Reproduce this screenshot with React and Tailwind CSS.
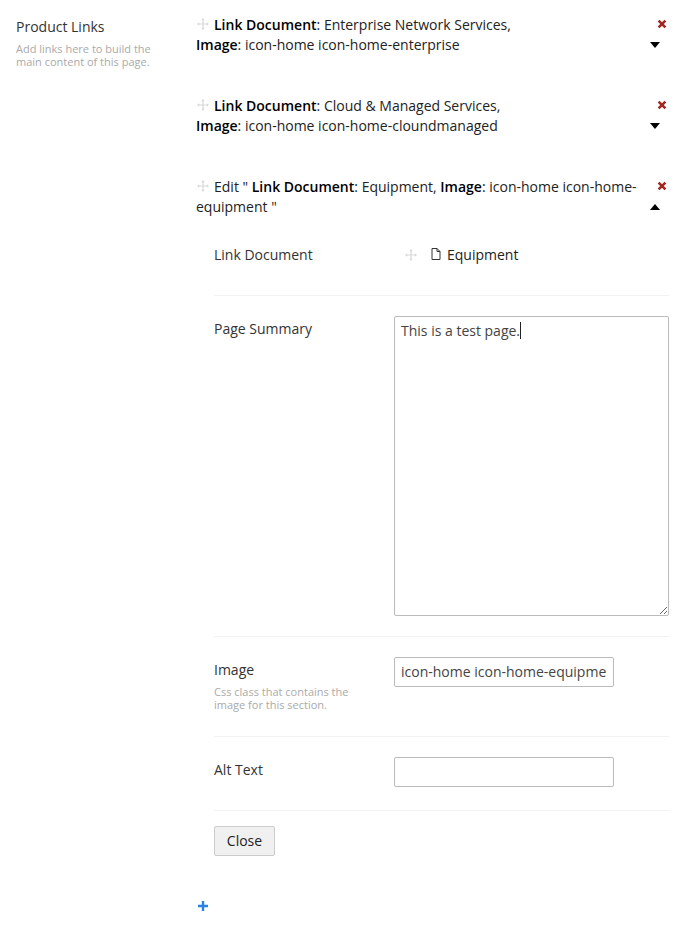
const Move = ({ className = "" }) => (
  <svg width="12" height="12" viewBox="0 0 12 12" className={className} aria-hidden="true">
    <path d="M6 0 L7.8 2.2 H6.6 V5.4 H9.8 V4.2 L12 6 L9.8 7.8 V6.6 H6.6 V9.8 H7.8 L6 12 L4.2 9.8 H5.4 V6.6 H2.2 V7.8 L0 6 L2.2 4.2 V5.4 H5.4 V2.2 H4.2 Z" fill="#d9d9d9" />
  </svg>
);

const Cross = () => (
  <svg width="10" height="10" viewBox="0 0 10 10" className="absolute right-[2px] top-[4px]" aria-hidden="true">
    <path d="M1.6 1.6 L8.4 8.4 M8.4 1.6 L1.6 8.4" stroke="#a02a23" strokeWidth="2.6" />
  </svg>
);

const Arrow = ({ up }) => (
  <svg width="10" height="6" viewBox="0 0 10 6" className="absolute right-[9px] top-[27px]" aria-hidden="true">
    <path d={up ? "M0 6 L5 0 L10 6 Z" : "M0 0 L10 0 L5 6 Z"} fill="#000" />
  </svg>
);

const Item = ({ children, up, className = "" }) => (
  <div className={`relative pr-[32px] ${className}`}>
    <div className="text-[14px] leading-[20px] text-[#222]">{children}</div>
    <Cross />
    <Arrow up={up} />
  </div>
);

const Grip = () => <Move className="inline-block align-[0px] mr-[5px] ml-px" />;

const B = ({ children }) => <b className="font-semibold text-black">{children}</b>;

const Label = ({ children }) => (
  <div className="w-[180px] shrink-0 text-[14px] leading-[20px] text-[#333]">{children}</div>
);

export default function App() {
  return (
    <div className="flex w-[677px] h-[945px] bg-white font-['Open_Sans',sans-serif] overflow-hidden">
      <div className="w-[196px] shrink-0 pl-4 pt-[17px]">
        <div className="text-[14px] leading-[20px] text-[#333]">Product Links</div>
        <p className="mt-[5px] text-[11px] leading-[13px] text-[#aaa]">
          Add links here to build the
          <br />
          main content of this page.
        </p>
      </div>

      <div className="w-[473px] shrink-0 pt-[15px]">
        <Item className="mb-[41px]">
          <Grip />
          <B>Link Document</B>: Enterprise Network Services,
          <br />
          <B>Image</B>: icon-home icon-home-enterprise
        </Item>
        <Item className="mb-[41px]">
          <Grip />
          <B>Link Document</B>: Cloud &amp; Managed Services,
          <br />
          <B>Image</B>: icon-home icon-home-cloundmanaged
        </Item>
        <Item up>
          <Grip />
          Edit " <B>Link Document</B>: Equipment, <B>Image</B>: icon-home icon-home-equipment "
        </Item>

        <div className="ml-[18px]">
          <div className="flex pt-[28px] pb-[30px] border-b border-[#f2f2f2]">
            <Label>Link Document</Label>
            <div className="flex items-center text-[14px] leading-[20px] text-[#222]">
              <Move className="ml-[11px] mr-[14px]" />
              <svg width="10" height="12" viewBox="0 0 10 12" className="mr-[6px] -mt-[3px]" aria-hidden="true">
                <path d="M1 .5 H6 L9 3.5 V11.5 H1 Z M6 .5 V3.5 H9" fill="none" stroke="#333" strokeWidth="1" />
              </svg>
              Equipment
            </div>
          </div>

          <div className="flex pt-5 pb-5 border-b border-[#f2f2f2]">
            <div className="pt-[3px]">
              <Label>Page Summary</Label>
            </div>
            <div className="relative">
              <textarea
                readOnly
                defaultValue="This is a test page."
                className="block w-[275px] h-[300px] rounded-[2px] border border-[#bbb] px-[6px] py-[4px] text-[14px] leading-[20px] text-[#444] outline-none"
              />
              <span className="absolute left-[126px] top-[6px] w-px h-[17px] bg-[#222]" />
            </div>
          </div>

          <div className="flex pt-5 pb-[25px] border-b border-[#f2f2f2]">
            <div className="pt-[3px]">
              <Label>Image</Label>
              <p className="mt-[5px] text-[11px] leading-[13px] text-[#aaa]">
                Css class that contains the
                <br />
                image for this section.
              </p>
            </div>
            <input
              readOnly
              defaultValue="icon-home icon-home-equipment"
              className="block w-[220px] h-[30px] rounded-[2px] border border-[#bbb] px-[6px] pb-[2px] text-[14px] text-[#444] outline-none"
            />
          </div>

          <div className="flex pt-5 pb-[23px] border-b border-[#f2f2f2]">
            <div className="pt-[3px]">
              <Label>Alt Text</Label>
            </div>
            <input
              readOnly
              className="block w-[220px] h-[30px] rounded-[2px] border border-[#bbb] px-[6px] text-[14px] text-[#444] outline-none"
            />
          </div>

          <button className="mt-[15px] block w-[61px] h-[30px] rounded-[2px] border border-[#ccc] bg-[#f0f0f0] pb-[2px] text-[14px] text-[#222]">
            Close
          </button>
        </div>

        <svg width="10" height="10" viewBox="0 0 10 10" className="block mt-[45px] ml-[2px]" aria-hidden="true">
          <path d="M5 0 V10 M0 5 H10" stroke="#2a82e6" strokeWidth="2.4" />
        </svg>
      </div>
    </div>
  );
}
